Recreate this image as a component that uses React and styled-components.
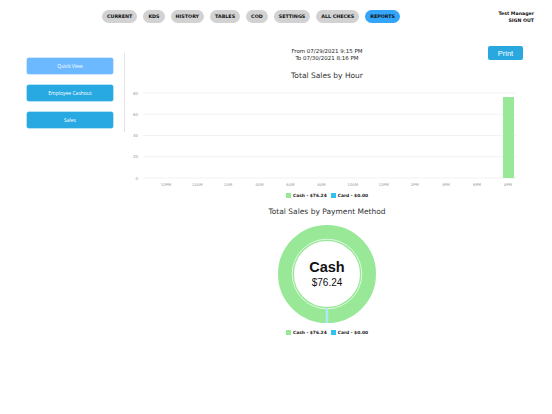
import React from "react";
import styled, { createGlobalStyle } from "styled-components";

const GlobalStyle = createGlobalStyle`
  body {
    margin: 0;
    background: #fff;
    font-family: "DejaVu Sans", "Open Sans", sans-serif;
    color: #222;
  }
`;

const tabs = ["CURRENT", "KDS", "HISTORY", "TABLES", "COD", "SETTINGS", "ALL CHECKS", "REPORTS"];
const hours = ["10PM", "12AM", "2AM", "4AM", "6AM", "8AM", "10AM", "12PM", "2PM", "4PM", "6PM", "8PM"];
const ticks = [80, 60, 40, 20, 0];

const GREEN = "#98e898";
const BLUE = "#2fc3f5";

const ChartLegend = () => (
  <Legend>
    <LegendItem>
      <Swatch $color={GREEN} />
      Cash - $76.24
    </LegendItem>
    <LegendItem>
      <Swatch $color={BLUE} />
      Card - $0.00
    </LegendItem>
  </Legend>
);

const App = () => {
  const top = 6;
  const base = 91;
  const yOf = (v) => base - (v / 80) * (base - top);
  return (
    <>
      <GlobalStyle />
      <Page>
        <Header>
          <Nav>
            {tabs.map((t) => (
              <Pill key={t} $active={t === "REPORTS"}>
                {t}
              </Pill>
            ))}
          </Nav>
          <User>
            <span>Test Manager</span>
            <span>SIGN OUT</span>
          </User>
        </Header>
        <Body>
          <Sidebar>
            <SideButton $light>Quick View</SideButton>
            <SideButton>Employee Cashout</SideButton>
            <SideButton>Sales</SideButton>
          </Sidebar>
          <Main>
            <TopRow>
              <Range>
                <div>From 07/29/2021 9:15 PM</div>
                <div>To 07/30/2021 8:16 PM</div>
              </Range>
              <PrintButton>Print</PrintButton>
            </TopRow>
            <Title>Total Sales by Hour</Title>
            <svg width="404" height="100" viewBox="0 0 404 100">
              {ticks.map((v) => (
                <g key={v}>
                  <line x1="18" x2="391" y1={yOf(v)} y2={yOf(v)} stroke="#ececec" strokeWidth="0.7" />
                  <text x="13" y={yOf(v) + 1.5} fontSize="4" fill="#999" textAnchor="end" fontFamily="DejaVu Sans, sans-serif">
                    {v}
                  </text>
                </g>
              ))}
              {hours.map((h, i) => (
                <text
                  key={h}
                  x={41 + i * 31.1}
                  y="98.5"
                  fontSize="3.8"
                  fill="#999"
                  textAnchor="middle"
                  fontFamily="DejaVu Sans, sans-serif"
                >
                  {h}
                </text>
              ))}
              <rect x="378" y={yOf(76.24)} width="11" height={base - yOf(76.24)} fill={GREEN} />
            </svg>
            <ChartLegend />
            <SubTitle>Total Sales by Payment Method</SubTitle>
            <Donut>
              <svg width="100" height="100" viewBox="0 0 100 100">
                <circle cx="50" cy="50" r="41" fill="none" stroke={GREEN} strokeWidth="16" />
                <circle cx="50" cy="50" r="34.8" fill="none" stroke="#fff" strokeWidth="0.7" />
                <line x1="50" x2="50" y1="84" y2="99" stroke="#fff" strokeWidth="2.2" />
                <line x1="50" x2="50" y1="84" y2="99" stroke={BLUE} strokeWidth="0.8" />
              </svg>
              <DonutLabel>
                <strong>Cash</strong>
                <span>$76.24</span>
              </DonutLabel>
            </Donut>
            <BottomLegend>
              <ChartLegend />
            </BottomLegend>
          </Main>
        </Body>
      </Page>
    </>
  );
};

export default App;

const Page = styled.div`
  width: 552px;
  height: 414px;
  overflow: hidden;
`;

const Header = styled.div`
  display: flex;
  align-items: flex-start;
  justify-content: space-between;
  padding: 10px 18px 0 102px;
`;

const Nav = styled.div`
  display: flex;
  gap: 6px;
`;

const Pill = styled.div`
  height: 13px;
  padding: 0 5px;
  border-radius: 7px;
  display: flex;
  align-items: center;
  font-size: 4.8px;
  font-weight: bold;
  color: #111;
  background: ${(p) => (p.$active ? "#33a6fb" : "#d2d2d2")};
`;

const User = styled.div`
  display: flex;
  flex-direction: column;
  align-items: flex-end;
  padding-top: 1px;
  font-size: 4.7px;
  font-weight: bold;
  line-height: 6.5px;
  color: #111;
`;

const Body = styled.div`
  display: flex;
  padding-top: 23px;
`;

const Sidebar = styled.div`
  width: 125px;
  box-sizing: border-box;
  display: flex;
  flex-direction: column;
  gap: 11px;
  padding: 5px 11px 0 27px;
  height: 79px;
  margin-top: 6px;
  border-right: 1px solid #e4e4e4;
`;

const SideButton = styled.div`
  height: 16px;
  border-radius: 2px;
  display: flex;
  align-items: center;
  justify-content: center;
  font-family: "Open Sans", sans-serif;
  font-size: 5px;
  color: #fff;
  background: ${(p) => (p.$light ? "#6cb9ff" : "#28a9e1")};
  box-shadow: 0 0 0 0.5px ${(p) => (p.$light ? "#9fd0ff" : "#6cc4ea")};
`;

const Main = styled.div`
  width: 404px;
  display: flex;
  flex-direction: column;
  align-items: center;
`;

const TopRow = styled.div`
  position: relative;
  width: 100%;
  display: flex;
  justify-content: center;
`;

const Range = styled.div`
  text-align: center;
  font-size: 5.5px;
  line-height: 7px;
  color: #222;
  padding-top: 1px;
`;

const PrintButton = styled.div`
  position: absolute;
  right: 6px;
  top: -1px;
  width: 35px;
  height: 14px;
  border-radius: 2px;
  background: #29a8e0;
  color: #fff;
  font-family: "Liberation Sans", sans-serif;
  font-size: 7.5px;
  display: flex;
  align-items: center;
  justify-content: center;
`;

const Title = styled.div`
  margin-top: 9px;
  margin-bottom: 7px;
  font-size: 7.5px;
  color: #333;
`;

const SubTitle = styled(Title)`
  margin-top: 9px;
  margin-bottom: 8px;
`;

const Legend = styled.div`
  display: flex;
  gap: 4px;
  margin-top: 6px;
`;

const BottomLegend = styled.div`
  margin-top: 0;
`;

const LegendItem = styled.div`
  display: flex;
  align-items: center;
  gap: 2px;
  font-size: 4.4px;
  font-weight: bold;
  color: #222;
`;

const Swatch = styled.span`
  width: 5px;
  height: 5px;
  background: ${(p) => p.$color};
`;

const Donut = styled.div`
  position: relative;
  width: 100px;
  height: 100px;
`;

const DonutLabel = styled.div`
  position: absolute;
  inset: 0;
  display: flex;
  flex-direction: column;
  align-items: center;
  justify-content: center;
  font-family: "Liberation Sans", sans-serif;
  color: #111;
  padding-bottom: 1px;
  strong {
    font-size: 14.5px;
    line-height: 17px;
  }
  span {
    font-size: 10px;
    line-height: 13px;
  }
`;
